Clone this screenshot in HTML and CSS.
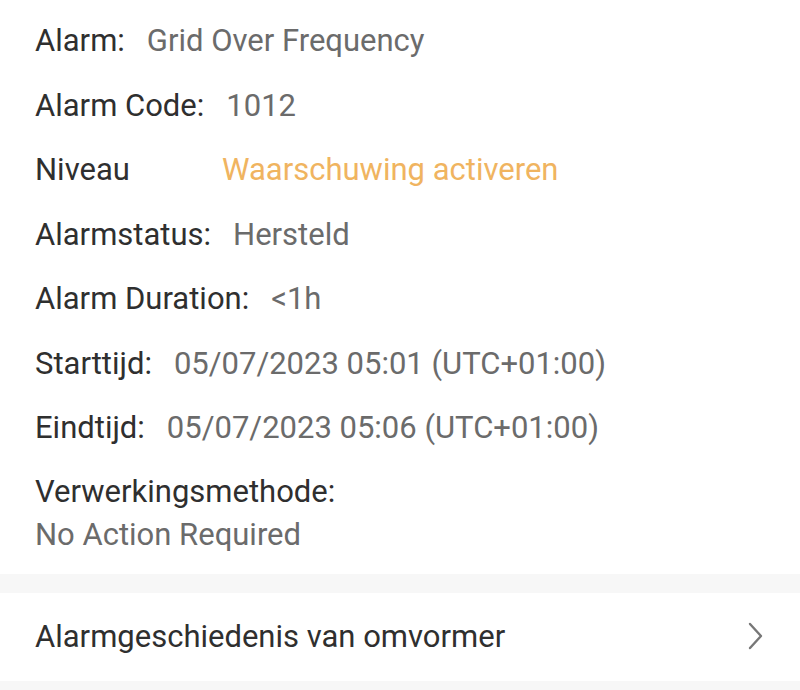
FILE: index.html
```html
<!DOCTYPE html>
<html lang="en">
<head>
  <meta charset="UTF-8" />
  <meta name="viewport" content="width=device-width, initial-scale=1.0"/>
  <title>Alarmdetails</title>
  <link rel="stylesheet" href="styles.css">
</head>
<body>

  <!-- Alarm details -->
  <section class="details">
    <div class="row">
      <span class="label">Alarm:</span>
      <span class="value">Grid Over Frequency</span>
    </div>
    <div class="row">
      <span class="label">Alarm Code:</span>
      <span class="value">1012</span>
    </div>
    <div class="row">
      <span class="label level">Niveau</span>
      <span class="value warning">Waarschuwing activeren</span>
    </div>
    <div class="row">
      <span class="label">Alarmstatus:</span>
      <span class="value">Hersteld</span>
    </div>
    <div class="row">
      <span class="label">Alarm Duration:</span>
      <span class="value">&lt;1h</span>
    </div>
    <div class="row">
      <span class="label">Starttijd:</span>
      <span class="value">05/07/2023 05:01 (UTC+01:00)</span>
    </div>
    <div class="row">
      <span class="label">Eindtijd:</span>
      <span class="value">05/07/2023 05:06 (UTC+01:00)</span>
    </div>
    <div class="row stacked">
      <span class="label">Verwerkingsmethode:</span>
      <span class="value">No Action Required</span>
    </div>
  </section>

  <div class="divider"></div>

  <!-- History link -->
  <a class="link-row" href="#">
    <span>Alarmgeschiedenis van omvormer</span>
    <svg class="chevron" width="20" height="30" viewBox="0 0 20 30">
      <path d="M4 3 L15 15 L4 27" fill="none" stroke="#777" stroke-width="2.4" stroke-linecap="round" stroke-linejoin="round"/>
    </svg>
  </a>

  <div class="divider bottom"></div>

</body>
</html>
```

FILE: styles.css
```css
body {
  margin: 0;
  font-family: Roboto, "Noto Sans", sans-serif;
  background: #fff;
  color: #333;
}

.details {
  padding: 16px 35px 18px;
}

.row {
  display: flex;
  align-items: baseline;
  height: 64.5px;
  font-size: 31px;
  line-height: 50px;
}

.label {
  color: #2f2f2f;
  margin-right: 22px;
}

.label.level {
  width: 165px;
}

.value {
  color: #6b6b6b;
}

.value.warning {
  color: #f0b460;
}

.row.stacked {
  flex-direction: column;
  align-items: flex-start;
  height: auto;
  padding-top: 2px;
  line-height: 43px;
}

.divider {
  height: 19px;
  background: #f7f7f7;
}

.divider.bottom {
  height: 20px;
}

.link-row {
  display: flex;
  align-items: center;
  justify-content: space-between;
  height: 88px;
  padding: 0 34px 0 35px;
  font-size: 31px;
  color: #2f2f2f;
  text-decoration: none;
}

.chevron {
  margin-top: -2px;
}
```
